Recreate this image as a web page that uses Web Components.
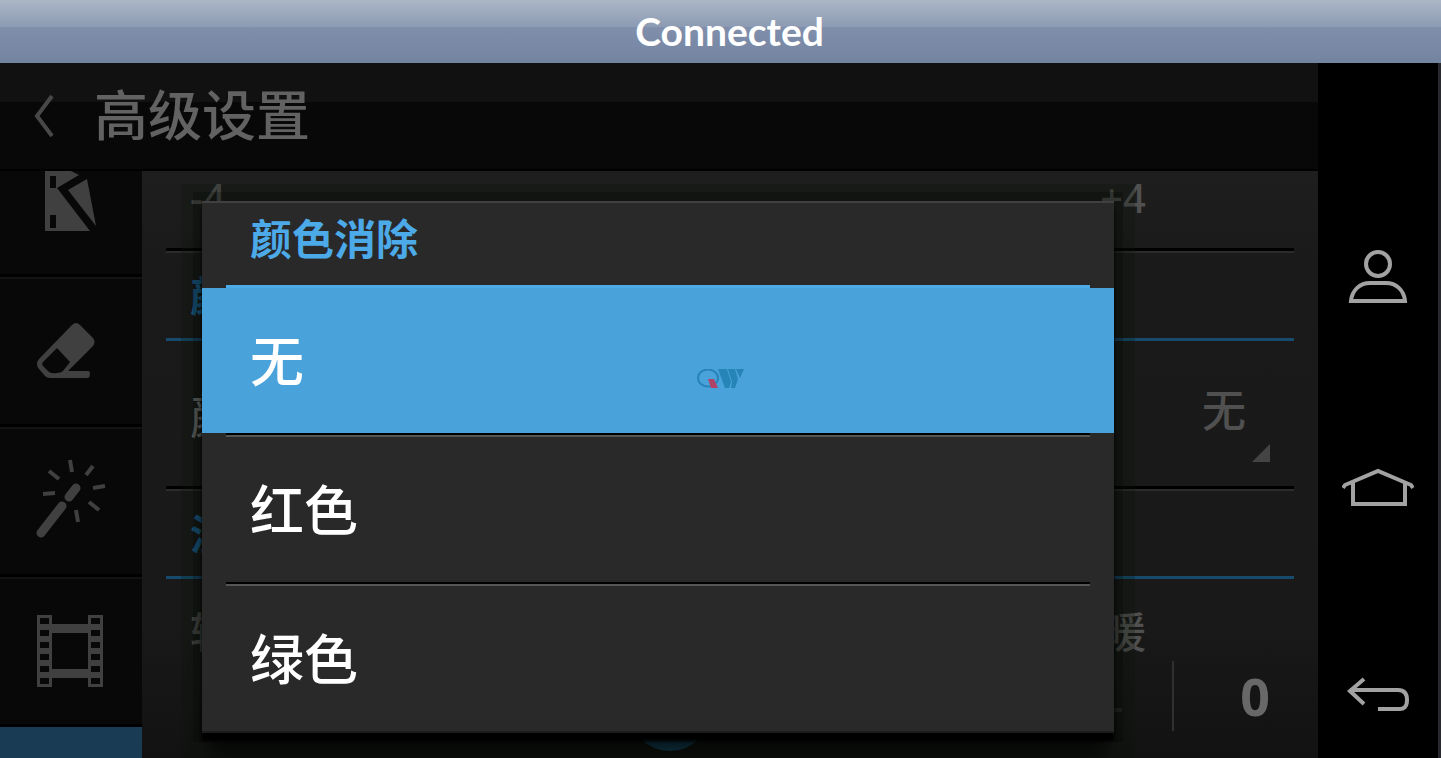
<!DOCTYPE html>
<html lang="zh-CN">
<head>
<meta charset="utf-8">
<title>高级设置</title>
<style>
    html, body {
        margin: 0;
        height: 100%;
        background: #000;
        font-family: "Noto Sans", "Noto Sans CJK SC", sans-serif;
    }
</style>
</head>
<body>
<remote-view>
    <status-bar slot="status">Connected</status-bar>

    <title-bar slot="screen">高级设置</title-bar>
    <mode-list slot="screen-side"></mode-list>
    <settings-panel slot="screen-main"></settings-panel>

    <choice-dialog slot="dialog" heading="颜色消除">
        <choice-item selected>无</choice-item>
        <choice-item>红色</choice-item>
        <choice-item>绿色</choice-item>
    </choice-dialog>

    <nav-keys slot="keys"></nav-keys>
    <brand-mark slot="mark"></brand-mark>
</remote-view>

<script>
class Base extends HTMLElement {

    constructor() {
        super()
        this.shadow = this.attachShadow({ mode: 'open' })
    }

    connectedCallback() {
        this.render()
    }
}

class RemoteView extends Base {

    render() {
        this.shadow.innerHTML =
      /*html*/`
      <style>
        :host{
            display:flex;
            flex-direction:column;
            position:relative;
            height:100vh;
            overflow:hidden;
        }

        .device{
            display:flex;
            flex:1;
            min-height:0;
        }

        .screen{
            display:flex;
            flex-direction:column;
            flex:1;
            min-width:0;
            position:relative;
            overflow:hidden;
        }

        .content{
            display:flex;
            flex:1;
            min-height:0;
        }

        /* the dialog lies over the dimmed settings */
        .overlay{
            position:absolute;
            inset:0;
            padding:138px 204px 24px 202px;
        }

        slot[name="screen-main"]::slotted(*){
            flex:1;
        }

        .mark{
            position:absolute;
            inset:0;
            display:flex;
            align-items:center;
            justify-content:center;
            pointer-events:none;
        }
      </style>

      <slot name="status"></slot>
      <div class="device">
          <div class="screen">
              <slot name="screen"></slot>
              <div class="content">
                  <slot name="screen-side"></slot>
                  <slot name="screen-main"></slot>
              </div>
              <div class="overlay"><slot name="dialog"></slot></div>
          </div>
          <slot name="keys"></slot>
      </div>
      <div class="mark"><slot name="mark"></slot></div>
      `
    }
}

class StatusBar extends Base {

    render() {
        this.shadow.innerHTML =
      /*html*/`
      <style>
        :host{
            display:flex;
            align-items:center;
            justify-content:center;
            box-sizing:border-box;
            flex:none;
            height:63px;
            padding:0 0 2px 18px;
            color:#fff;
            font:bold 39px/58px Lato, sans-serif;
            background:linear-gradient(#abb6c6, #8c9bb3 27px, #808fab 27px, #7384a1);
        }
      </style>
      <span><slot></slot></span>
      `
    }
}

class TitleBar extends Base {

    render() {
        this.shadow.innerHTML =
      /*html*/`
      <style>
        :host{
            display:block;
            flex:none;
            background:linear-gradient(#111 39px, #080808 39px);
            border-bottom:2px solid #000;
        }

        header{
            display:flex;
            align-items:center;
            gap:38px;
            height:106px;
            padding-left:32px;
        }

        button{
            padding:0;
            border:0;
            background:none;
            line-height:0;
        }

        h1{
            margin:0;
            padding-bottom:2px;
            color:#626262;
            font-size:54px;
            font-weight:500;
            line-height:80px;
        }
      </style>

      <header>
          <button aria-label="返回">
              <svg width="24" height="44" viewBox="0 0 24 44" fill="none" stroke="#484848" stroke-width="4"><path d="M20 2 5 22l15 20"/></svg>
          </button>
          <h1><slot></slot></h1>
      </header>
      `
    }
}

class ModeList extends Base {

    render() {
        this.shadow.innerHTML =
      /*html*/`
      <style>
        :host{
            display:block;
            flex:none;
            width:142px;
            overflow:hidden;
            background:#080808;
        }

        button{
            display:flex;
            align-items:center;
            justify-content:center;
            box-sizing:border-box;
            width:100%;
            height:150px;
            padding:0;
            border:solid #000;
            border-width:0 0 3px;
            background:none;
            box-shadow:0 2px #131313;
            color:#404040;
        }

        /* scrolled partly under the title bar */
        .first{
            height:106px;
            align-items:flex-start;
        }

        .active{
            background:#193c54;
        }
      </style>

      <button class="first" aria-label="剪辑">
          <svg width="54" height="60" viewBox="45 171 54 60" fill="currentColor">
              <path fill-rule="evenodd" d="M46 171h26l8 4-22 13 33 43H46zM51 176v12h6v-12zM51 215v13h6v-13z"/>
              <path d="M88 179 69 190l28 36z"/>
          </svg>
      </button>
      <button aria-label="橡皮擦">
          <svg width="70" height="60" viewBox="36 321 70 60" fill="currentColor">
              <path fill-rule="evenodd" d="M80 325l13 13q3 4 0 8L68 371h20q2 0 2 3t-2 4H50q-3 0-5-2l-6-7q-4-5 0-10l33-34q4-4 8 0zM57 348 43 362q-2 3 1 5l5 5q3 2 8 1 4 0 6-2l7-9z"/>
          </svg>
      </button>
      <button aria-label="魔术棒">
          <svg width="74" height="84" viewBox="35 458 74 84" fill="none" stroke="currentColor" stroke-width="4">
              <path stroke-width="9" stroke-linecap="round" d="M42 532 63 505M70 496l7-9"/>
              <path d="M71 459l2 12M94 465l-7 9M106 485l-12 2M90 501l10 8M77 509l2 12M44 493l12-1M50 470l10 8"/>
          </svg>
      </button>
      <button aria-label="影片">
          <svg width="70" height="72" viewBox="36 615 70 72" fill="currentColor">
              <path fill-rule="evenodd" d="M37 615h15v9h36v-9h15v72H88v-9H52v9H37zM52 633v36h36v-36zM40 618v6h9v-6zM40 630v6h9v-6zM40 642v6h9v-6zM40 654v6h9v-6zM40 666v6h9v-6zM40 678v6h9v-6zM91 618v6h9v-6zM91 630v6h9v-6zM91 642v6h9v-6zM91 654v6h9v-6zM91 666v6h9v-6zM91 678v6h9v-6z"/>
          </svg>
      </button>
      <button class="active" aria-label="设置"></button>
      `
    }
}

class SettingsPanel extends Base {

    render() {
        this.shadow.innerHTML =
      /*html*/`
      <style>
        :host{
            display:block;
            min-width:0;
            padding:0 24px;
            overflow:hidden;
            background:linear-gradient(#1e1e1e, #1a1a1a 90px, #191919 450px, #121212);
        }

        .scale, .row, .slider, h2{
            display:flex;
            align-items:center;
            box-sizing:border-box;
        }

        .scale{
            justify-content:space-between;
            height:82px;
            padding:0 148px 28px 24px;
            color:#505050;
            font-size:40px;
            font-weight:500;
            line-height:52px;
        }

        .scale.plain{
            padding-bottom:0;
            padding-top:24px;
            font-size:42px;
        }

        .line{
            border-top:3px solid #000;
            border-bottom:2px solid #2c2c2c;
            margin-top:-5px;
        }

        h2{
            height:88px;
            margin:0;
            padding:0 24px 4px;
            border-bottom:3px solid #174b6e;
            color:#1b6497;
            font-size:42px;
        }

        .row{
            justify-content:space-between;
            height:150px;
            padding:0 24px 6px;
            color:#777;
            font-size:48px;
        }

        .pick{
            display:flex;
            flex-direction:column;
            align-items:flex-end;
            gap:4px;
            padding-top:12px;
        }

        select{
            appearance:none;
            width:68px;
            height:64px;
            padding:0;
            border:0;
            background:none;
            color:#505050;
            font:500 44px/64px "Noto Sans CJK SC", sans-serif;
        }

        .slider{
            height:70px;
            padding:0 24px 0 52px;
        }

        input{
            appearance:none;
            flex:1;
            min-width:0;
            height:4px;
            margin:28px 50px 0 0;
            background:#2a2a2a;
        }

        input::-webkit-slider-thumb{
            appearance:none;
            width:82px;
            height:82px;
            border-radius:50%;
            background:#1c5f8c;
        }

        output{
            box-sizing:border-box;
            width:98px;
            border-left:2px solid #303030;
            color:#686868;
            font:bold 52px/70px "Noto Sans", sans-serif;
            text-align:right;
        }
      </style>

      <div class="scale"><span>-4</span><span>+4</span></div>
      <div class="line"></div>
      <h2>颜</h2>
      <div class="row">
          <label for="remove">颜</label>
          <div class="pick">
              <select id="remove"><option>无</option></select>
              <svg width="18" height="18" viewBox="0 0 18 18" fill="#444"><path d="M18 0v18H0z"/></svg>
          </div>
      </div>
      <div class="line"></div>
      <h2>温</h2>
      <div class="scale plain"><span>较</span><span>暖</span></div>
      <div class="slider">
          <input type="range" min="-4" max="4" value="0" aria-label="温度">
          <output>0</output>
      </div>
      `
    }
}

class ChoiceDialog extends Base {

    render() {
        this.shadow.innerHTML =
      /*html*/`
      <style>
        :host{
            display:flex;
            flex-direction:column;
            border-top:2px solid #404040;
            border-bottom:2px solid #1c1c1c;
            background:#292929;
            box-shadow:0 8px 3px #000, 0 0 0 9px rgba(0, 0, 0, 0.2), 0 4px 0 21px rgba(6, 18, 4, 0.25), 0 32px 16px -8px rgba(0, 0, 0, 0.7);
        }

        h2{
            flex:none;
            box-sizing:border-box;
            height:85px;
            margin:0 24px;
            padding-left:24px;
            border-bottom:3px solid #4caae8;
            color:#4caae8;
            font-size:42px;
            line-height:72px;
        }
      </style>

      <h2>${this.getAttribute('heading')}</h2>
      <slot></slot>
      `
    }
}

class ChoiceItem extends Base {

    render() {
        this.shadow.innerHTML =
      /*html*/`
      <style>
        :host{
            display:block;
        }

        button{
            display:block;
            width:100%;
            height:145px;
            padding:0 48px;
            border:0;
            background:none;
            color:#fff;
            font-family:inherit;
            font-size:54px;
            font-weight:500;
            line-height:80px;
            text-align:left;
        }

        :host([selected]) button{
            background:#4aa2db;
        }

        .line{
            margin:0 24px;
            border-top:2px solid #000;
            border-bottom:2px solid #555;
        }

        :host(:last-child) .line{
            display:none;
        }
      </style>

      <button><slot></slot></button>
      <div class="line"></div>
      `
        let button = this.shadow.querySelector('button')

        button.addEventListener('click', () => {
            for (const item of this.parentElement.children) {
                item.toggleAttribute('selected', item === this)
            }
        })
    }
}

class NavKeys extends Base {

    render() {
        this.shadow.innerHTML =
      /*html*/`
      <style>
        :host{
            display:flex;
            flex-direction:column;
            align-items:center;
            justify-content:space-between;
            box-sizing:border-box;
            flex:none;
            width:123px;
            padding:186px 0 35px;
            border-right:3px solid #28282f;
            background:#000;
        }

        button{
            padding:0;
            border:0;
            background:none;
            line-height:0;
        }

        svg{
            fill:none;
            stroke:#a2a2a2;
            stroke-width:4;
        }
      </style>

      <button aria-label="用户">
          <svg width="72" height="56" viewBox="0 0 72 56"><circle cx="36" cy="15" r="12"/><path d="M9 52c1-11 9-18 19-18h16c10 0 18 7 19 18z"/></svg>
      </button>
      <button aria-label="主页">
          <svg width="72" height="56" viewBox="0 0 72 56"><path d="M1 30l2-3L36 13l33 14 2 3M11 24v22h52V24"/></svg>
      </button>
      <button aria-label="返回">
          <svg width="72" height="56" viewBox="0 0 72 56"><path d="M22 12 8 24l14 13M8 23h48q9 0 9 10t-9 9H36"/></svg>
      </button>
      `
    }
}

class BrandMark extends Base {

    render() {
        this.shadow.innerHTML =
      /*html*/`
      <style>
        :host{
            display:block;
            line-height:0;
        }
      </style>
      <svg width="48" height="20" viewBox="0 0 48 20">
          <ellipse cx="11" cy="9" rx="10" ry="8.5" fill="none" stroke="#2784b6" stroke-width="2"/>
          <path fill="#b04468" d="M11 10h6l4 9h-7z"/>
          <path fill="#2784b6" d="M21 0h9l4 13-2 6h-4zM31 0h7l3 10-3 9h-4l1-6zM39 0h8l-4 9z"/>
      </svg>
      `
    }
}

customElements.define('remote-view', RemoteView);
customElements.define('status-bar', StatusBar);
customElements.define('title-bar', TitleBar);
customElements.define('mode-list', ModeList);
customElements.define('settings-panel', SettingsPanel);
customElements.define('choice-dialog', ChoiceDialog);
customElements.define('choice-item', ChoiceItem);
customElements.define('nav-keys', NavKeys);
customElements.define('brand-mark', BrandMark);
</script>
</body>
</html>
